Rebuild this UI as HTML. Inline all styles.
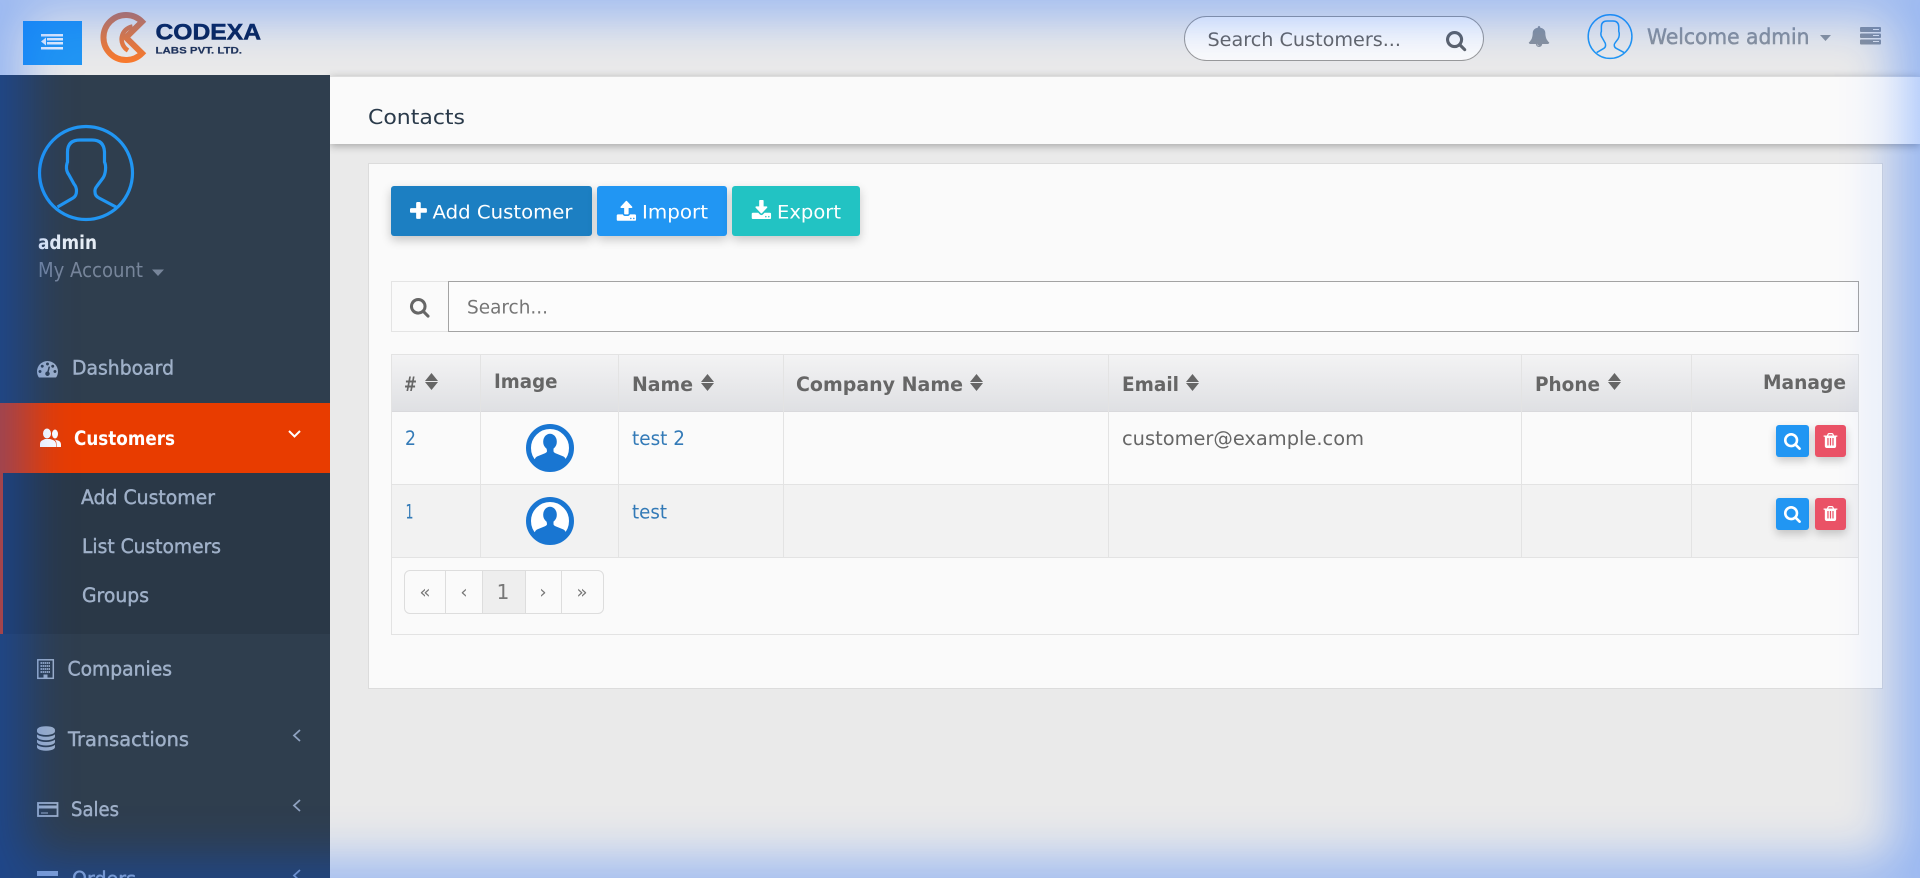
<!DOCTYPE html>
<html><head><meta charset="utf-8"><title>Contacts</title>
<style>
html,body{margin:0;padding:0;width:1920px;height:878px;overflow:hidden;background:#eaeaea}
.b{position:absolute;box-sizing:border-box}
svg{position:absolute;left:0;top:0}
text{font-family:"DejaVu Sans","Liberation Sans",sans-serif;white-space:pre}
</style></head><body>
<div class="b" style="left:0;top:0;width:1920px;height:75px;background:#eaeaea"></div>
<div class="b" style="left:23px;top:21px;width:59px;height:44px;background:#2196f3"></div>
<div class="b" style="left:1184px;top:16px;width:300px;height:45px;border:1px solid #999;border-radius:23px;background:#fbfbfb"></div>
<div class="b" style="left:330px;top:76px;width:1590px;height:68px;background:#fafafa;border-top:1px solid #ddd;box-shadow:0 2px 8px rgba(0,0,0,.3)"></div>
<div class="b" style="left:0;top:75px;width:330px;height:803px;background:#2f3e4e"></div>
<div class="b" style="left:0;top:403px;width:330px;height:70px;background:#e83c00"></div>
<div class="b" style="left:0;top:473px;width:330px;height:161px;background:#2a3847;border-left:3px solid #e83c00"></div>
<div class="b" style="left:368px;top:163px;width:1515px;height:526px;background:#fafafa;border:1px solid #dcdcdc"></div>
<div class="b" style="left:391px;top:186px;width:201px;height:50px;background:#1c7fc2;border-radius:3px;box-shadow:0 4px 10px rgba(0,0,0,.22)"></div>
<div class="b" style="left:597px;top:186px;width:130px;height:50px;background:#2196f3;border-radius:3px;box-shadow:0 4px 10px rgba(0,0,0,.2)"></div>
<div class="b" style="left:732px;top:186px;width:128px;height:50px;background:#22c3c3;border-radius:3px;box-shadow:0 4px 10px rgba(0,0,0,.2)"></div>
<div class="b" style="left:391px;top:281px;width:58px;height:51px;background:#fafafa;border:1px solid #e4e4e4;border-right:0"></div>
<div class="b" style="left:448px;top:281px;width:1411px;height:51px;background:#fcfcfc;border:1px solid #a3a3a3"></div>
<div class="b" style="left:391px;top:354px;width:1468px;height:281px;border:1px solid #e3e3e3"></div>
<div class="b" style="left:392px;top:355px;width:1466px;height:57px;background:linear-gradient(#f3f3f4,#dfe0e3);border-bottom:1px solid #d9d9dc"></div>
<div class="b" style="left:392px;top:484px;width:1466px;height:74px;background:#f2f2f2;border-top:1px solid #e3e3e3;border-bottom:1px solid #e3e3e3"></div>
<div class="b" style="left:480px;top:355px;width:1px;height:203px;background:#e3e3e3"></div>
<div class="b" style="left:618px;top:355px;width:1px;height:203px;background:#e3e3e3"></div>
<div class="b" style="left:783px;top:355px;width:1px;height:203px;background:#e3e3e3"></div>
<div class="b" style="left:1108px;top:355px;width:1px;height:203px;background:#e3e3e3"></div>
<div class="b" style="left:1521px;top:355px;width:1px;height:203px;background:#e3e3e3"></div>
<div class="b" style="left:1691px;top:355px;width:1px;height:203px;background:#e3e3e3"></div>
<div class="b" style="left:404px;top:570px;width:200px;height:44px;border:1px solid #ddd;border-radius:6px;background:#fafafa"></div>
<div class="b" style="left:482px;top:571px;width:44px;height:42px;background:#eee"></div>
<div class="b" style="left:445px;top:571px;width:1px;height:42px;background:#ddd"></div>
<div class="b" style="left:482px;top:571px;width:1px;height:42px;background:#ddd"></div>
<div class="b" style="left:525px;top:571px;width:1px;height:42px;background:#ddd"></div>
<div class="b" style="left:561px;top:571px;width:1px;height:42px;background:#ddd"></div>
<div class="b" style="left:1776px;top:425px;width:33px;height:32px;background:#2196f3;border-radius:3px;box-shadow:0 4px 9px rgba(0,0,0,.2)"></div>
<div class="b" style="left:1815px;top:425px;width:31px;height:32px;background:#ea5266;border-radius:3px;box-shadow:0 4px 9px rgba(0,0,0,.2)"></div>
<div class="b" style="left:1776px;top:498px;width:33px;height:32px;background:#2196f3;border-radius:3px;box-shadow:0 4px 9px rgba(0,0,0,.2)"></div>
<div class="b" style="left:1815px;top:498px;width:31px;height:32px;background:#ea5266;border-radius:3px;box-shadow:0 4px 9px rgba(0,0,0,.2)"></div>

<svg width="1920" height="878" viewBox="0 0 1920 878" xmlns="http://www.w3.org/2000/svg">
<defs>
<linearGradient id="lg" gradientUnits="userSpaceOnUse" x1="0" y1="12" x2="0" y2="63"><stop offset="0" stop-color="#cb7655"/><stop offset="1" stop-color="#fb7a2a"/></linearGradient>
<path id="s" d="M1216 832q0-185-131.500-316.500t-316.500-131.500-316.500 131.500-131.500 316.500 131.500 316.500 316.500 131.500 316.500-131.500 131.500-316.500zm512 832q0 52-38 90t-90 38q-54 0-90-38l-343-342q-179 124-399 124-143 0-273.500-55.500t-225-150-150-225-55.500-273.500 55.500-273.500 150-225 225-150 273.500-55.500 273.500 55.500 225 150 150 225 55.500 273.500q0 220-124 399l343 343q37 37 37 90z"/>
<path id="tr" d="M704 1376v-704q0-14-9-23t-23-9h-64q-14 0-23 9t-9 23v704q0 14 9 23t23 9h64q14 0 23-9t9-23zm256 0v-704q0-14-9-23t-23-9h-64q-14 0-23 9t-9 23v704q0 14 9 23t23 9h64q14 0 23-9t9-23zm256 0v-704q0-14-9-23t-23-9h-64q-14 0-23 9t-9 23v704q0 14 9 23t23 9h64q14 0 23-9t9-23zm-544-992h448l-48-117q-7-9-17-11h-317q-10 2-17 11zm928 32v64q0 14-9 23t-23 9h-96v948q0 83-47 143.500t-113 60.500h-832q-66 0-113-58.500t-47-141.500v-952h-96q-14 0-23-9t-9-23v-64q0-14 9-23t23-9h309l70-167q15-37 54-63t79-26h320q40 0 79 26t54 63l70 167h309q14 0 23 9t9 23z"/>
<g id="sort" fill="#666"><path d="M6.500 0L13 8H0z"/><path d="M0 9h13L6.500 17z"/></g>
<g id="av"><circle cx="24" cy="24" r="21.500" fill="#fff" stroke="#1976d2" stroke-width="5"/><ellipse cx="24" cy="17.700" rx="6.800" ry="8" fill="#1976d2"/><path d="M20.500 24h7v3q0 1.500 2 2.200l8 3.300q1.500.7 2.500 3L38 38Q32 45 24 45 16 45 10 38L8.500 35.500q1-2.300 2.500-3l8-3.300q2-.7 2-2.200z" fill="#1976d2"/></g>
<g id="head" fill="none"><circle cx="86" cy="173" r="46.500"/><path d="M57.500 207L73 198Q76.500 196 76.500 191Q76.500 187 74 184L69 175Q66 171 66.500 166Q67 163 67.500 162L67.500 152Q67.500 140 80 140L92 140Q104 140 104.500 152L104.500 162Q106 165 105.500 170Q105 175 103 178L97 186Q94.500 189 95 192Q95 196 99 198L116 207"/></g>
</defs>

<!-- top bar -->
<g fill="#e9f2fd"><rect x="41" y="34" width="22" height="2.500"/><rect x="47" y="38" width="16" height="2.500"/><rect x="47" y="42" width="16" height="2.500"/><rect x="41" y="47" width="22" height="2.500"/><path d="M46 37.500v8l-5-4z"/></g>
<path d="M142 21.700A22.500 22.500 0 1 0 142 53.300L126 37.500Z" fill="none" stroke="url(#lg)" stroke-width="6"/>
<path d="M132.500 26.500A13 13 0 0 0 128 50.500" fill="none" stroke="url(#lg)" stroke-width="4.500"/>
<text x="155.500" y="39.500" font-size="22" font-weight="700" fill="#0b2556" stroke="#0b2556" stroke-width=".5" style="font-family:'Liberation Sans',sans-serif" textLength="105.500" lengthAdjust="spacingAndGlyphs">CODEXA</text>
<text x="155.500" y="53.300" font-size="9.500" font-weight="700" fill="#1f3258" stroke="#1f3258" stroke-width=".2" style="font-family:'Liberation Sans',sans-serif" textLength="86.500" lengthAdjust="spacingAndGlyphs">LABS PVT. LTD.</text>
<text x="1207.500" y="46" font-size="19" fill="#666" textLength="193.500" lengthAdjust="spacingAndGlyphs">Search Customers...</text>
<use href="#s" transform="translate(1445.200,29.400) scale(.0122)" fill="#5f6368"/>
<path transform="translate(1528,26) scale(.0123,.0117)" fill="#8b929b" d="M912 1696q0-16-16-16-59 0-101.500-42.500t-42.500-101.500q0-16-16-16t-16 16q0 73 51.500 124.500t124.500 51.500q16 0 16-16zm816-288q0 52-38 90t-90 38h-448q0 106-75 181t-181 75-181-75-75-181h-448q-52 0-90-38t-38-90q50-42 91-88t85-119.500 74.500-158.500 50-206 19.500-260q0-152 117-282.500t307-158.500q-8-19-8-39 0-40 28-68t68-28 68 28 28 68q0 20-8 39 190 28 307 158.500t117 282.500q0 139 19.500 260t50 206 74.500 158.500 85 119.500 91 88z"/>
<use href="#head" transform="translate(1587.500,14) scale(.47) translate(-38,-125)" stroke="#2196f3" stroke-width="3.200"/>
<text x="1647" y="44" font-size="21" fill="#8b929b" stroke="#8b929b" stroke-width=".5" textLength="162.500" lengthAdjust="spacingAndGlyphs">Welcome admin</text>
<path d="M1820 35h11l-5.500 6z" fill="#8b929b"/>
<g fill="#8b929b"><rect x="1860" y="27" width="21" height="5" rx="1"/><rect x="1860" y="33.500" width="21" height="4.500" rx="1"/><rect x="1860" y="39.500" width="21" height="5" rx="1"/></g>
<g fill="#eaeaea"><rect x="1873" y="29" width="6" height="1"/><rect x="1873" y="35" width="6" height="1"/><rect x="1873" y="41" width="6" height="1"/></g>
<text x="368" y="124" font-size="20.500" fill="#2a3a4a" textLength="97" lengthAdjust="spacingAndGlyphs">Contacts</text>

<!-- sidebar -->
<use href="#head" stroke="#2196f3" stroke-width="3.200"/>
<text x="38" y="249" font-size="18.500" font-weight="700" fill="#e6edf5" textLength="59" lengthAdjust="spacingAndGlyphs">admin</text>
<text x="38" y="277" font-size="20" fill="#77859a" textLength="105" lengthAdjust="spacingAndGlyphs">My Account</text>
<path d="M152 269.500h12l-6 6.500z" fill="#77859a"/>

<path transform="translate(37,358) scale(.0117)" fill="#9fb0c8" d="M384 1152q0-53-37.500-90.500t-90.500-37.500-90.500 37.500-37.500 90.500 37.500 90.500 90.500 37.500 90.500-37.500 37.500-90.500zm192-448q0-53-37.500-90.500t-90.500-37.500-90.500 37.500-37.500 90.500 37.500 90.500 90.500 37.500 90.500-37.500 37.500-90.500zm428 481l101-382q6-26-7.500-48.500t-38.500-29.500-48 6.500-30 39.500l-101 382q-60 5-107 43.500t-63 98.500q-20 77 20 146t117 89 146-20 89-117q16-60-6-117t-72-91zm660-33q0-53-37.500-90.500t-90.500-37.500-90.500 37.500-37.500 90.500 37.500 90.500 90.500 37.500 90.500-37.500 37.500-90.500zm-640-640q0-53-37.500-90.500t-90.500-37.500-90.500 37.500-37.500 90.500 37.500 90.500 90.500 37.500 90.500-37.500 37.500-90.500zm448 192q0-53-37.500-90.500t-90.500-37.500-90.500 37.500-37.500 90.500 37.500 90.500 90.500 37.500 90.500-37.500 37.500-90.500zm320 448q0 261-141 483-19 29-54 29h-1402q-35 0-54-29-141-221-141-483 0-182 71-348t191-286 286-191 348-71 348 71 286 191 191 286 71 348z"/>
<g font-size="19.500" fill="#9fb0c8" stroke="#9fb0c8" stroke-width=".45">
<text x="72" y="374.500" textLength="102" lengthAdjust="spacingAndGlyphs">Dashboard</text>
<text x="81" y="504" textLength="134" lengthAdjust="spacingAndGlyphs">Add Customer</text>
<text x="82" y="553" textLength="139" lengthAdjust="spacingAndGlyphs">List Customers</text>
<text x="82" y="602" textLength="67" lengthAdjust="spacingAndGlyphs">Groups</text>
<text x="67.500" y="675.500" textLength="104.500" lengthAdjust="spacingAndGlyphs">Companies</text>
<text x="68" y="746" textLength="121" lengthAdjust="spacingAndGlyphs">Transactions</text>
<text x="71" y="816" textLength="48" lengthAdjust="spacingAndGlyphs">Sales</text>
<text x="72" y="885.500" textLength="64" lengthAdjust="spacingAndGlyphs">Orders</text>
</g>
<g fill="#fff"><ellipse cx="47" cy="433.500" rx="4" ry="5"/><path d="M40 447v-3q0-3 3-4l2-1h5l3 1q3 1 3 4v3z"/><ellipse cx="55" cy="434" rx="3" ry="4.500"/><path d="M56 440l2 .5q3 1 3 4v2.500h-4.500v-3q0-3-2-4.500z"/></g>
<text x="74" y="445" font-size="19.500" font-weight="700" fill="#fff" textLength="101" lengthAdjust="spacingAndGlyphs">Customers</text>
<path d="M289 431l5.500 5.500 5.500-5.500" fill="none" stroke="#fff" stroke-width="2"/>
<rect x="37.800" y="659.800" width="15.500" height="18.500" fill="#2f3e4e" stroke="#9fb0c8" stroke-width="1.500"/>
<path d="M40.500 663h10M40.500 666h10M40.500 669h10M40.500 672h10" stroke="#9fb0c8" stroke-width="1.800" stroke-dasharray="1.500 .5"/><rect x="43.500" y="674.500" width="4" height="4" fill="#9fb0c8"/>
<path transform="translate(35.500,726.200) scale(.0117,.0137)" fill="#9fb0c8" d="M896 768q237 0 443-43t325-127v170q0 69-103 128t-280 93.500-385 34.500-385-34.500-280-93.500-103-128v-170q119 84 325 127t443 43zm0 768q237 0 443-43t325-127v170q0 69-103 128t-280 93.500-385 34.500-385-34.500-280-93.500-103-128v-170q119 84 325 127t443 43zm0-384q237 0 443-43t325-127v170q0 69-103 128t-280 93.500-385 34.500-385-34.500-280-93.500-103-128v-170q119 84 325 127t443 43zm0-1152q208 0 385 34.500t280 93.500 103 128v128q0 69-103 128t-280 93.500-385 34.500-385-34.500-280-93.500-103-128v-128q0-69 103-128t280-93.500 385-34.500z"/>
<path d="M300 730l-6 5.500 6 5.500" fill="none" stroke="#8fa2c0" stroke-width="1.800"/>
<rect x="38" y="803" width="19.500" height="13" fill="none" stroke="#9fb0c8" stroke-width="1.800"/><rect x="38" y="805.500" width="19.500" height="3" fill="#9fb0c8"/><path d="M41 813h7" stroke="#9fb0c8"/>
<path d="M300 800l-6 5.500 6 5.500" fill="none" stroke="#8fa2c0" stroke-width="1.800"/>
<g fill="#9fb0c8"><rect x="37" y="871" width="21" height="5"/></g>
<path d="M300 870l-6 5.500 6 5.500" fill="none" stroke="#8fa2c0" stroke-width="1.800"/>

<!-- buttons -->
<path transform="translate(407.700,200.500) scale(.012)" fill="#fff" d="M1600 736v192q0 40-28 68t-68 28h-416v416q0 40-28 68t-68 28h-192q-40 0-68-28t-28-68v-416h-416q-40 0-68-28t-28-68v-192q0-40 28-68t68-28h416v-416q0-40 28-68t68-28h192q40 0 68 28t28 68v416h416q40 0 68 28t28 68z"/>
<text x="432.500" y="218.500" font-size="19" fill="#fff" textLength="140" lengthAdjust="spacingAndGlyphs">Add Customer</text>
<path transform="translate(616,200) scale(.0116,.0125)" fill="#fff" d="M1344 1472q0-26-19-45t-45-19-45 19-19 45 19 45 45 19 45-19 19-45zm256 0q0-26-19-45t-45-19-45 19-19 45 19 45 45 19 45-19 19-45zm128-224v320q0 40-28 68t-68 28h-1472q-40 0-68-28t-28-68v-320q0-40 28-68t68-28h427q21 56 70.500 92t110.500 36h256q61 0 110.500-36t70.500-92h427q40 0 68 28t28 68zm-325-648q-17 40-59 40h-256v448q0 26-19 45t-45 19h-256q-26 0-45-19t-19-45v-448h-256q-42 0-59-40-17-39 14-69l448-448q18-19 45-19t45 19l448 448q31 30 14 69z"/>
<text x="642" y="218.500" font-size="19" fill="#fff" textLength="66" lengthAdjust="spacingAndGlyphs">Import</text>
<path transform="translate(751,200) scale(.0116,.0124)" fill="#fff" d="M1344 1344q0-26-19-45t-45-19-45 19-19 45 19 45 45 19 45-19 19-45zm256 0q0-26-19-45t-45-19-45 19-19 45 19 45 45 19 45-19 19-45zm128-224v320q0 40-28 68t-68 28h-1472q-40 0-68-28t-28-68v-320q0-40 28-68t68-28h465l135 136q58 56 136 56t136-56l136-136h464q40 0 68 28t28 68zm-325-569q17 41-14 70l-448 448q-18 19-45 19t-45-19l-448-448q-31-29-14-70 17-39 59-39h256v-448q0-26 19-45t45-19h256q26 0 45 19t19 45v448h256q42 0 59 39z"/>
<text x="777" y="218.500" font-size="19" fill="#fff" textLength="64" lengthAdjust="spacingAndGlyphs">Export</text>

<!-- search -->
<use href="#s" transform="translate(409.200,296.500) scale(.0118)" fill="#666"/>
<text x="467" y="313.500" font-size="19" fill="#757575" textLength="81" lengthAdjust="spacingAndGlyphs">Search...</text>

<!-- table head -->
<g font-size="19.500" font-weight="700" fill="#666">
<text x="404" y="391" textLength="13" lengthAdjust="spacingAndGlyphs">#</text>
<text x="494" y="388" textLength="63.500" lengthAdjust="spacingAndGlyphs">Image</text>
<text x="632" y="391" textLength="61" lengthAdjust="spacingAndGlyphs">Name</text>
<text x="796" y="391" textLength="167" lengthAdjust="spacingAndGlyphs">Company Name</text>
<text x="1122" y="391" textLength="57" lengthAdjust="spacingAndGlyphs">Email</text>
<text x="1535" y="391" textLength="65" lengthAdjust="spacingAndGlyphs">Phone</text>
<text x="1763" y="389" textLength="83" lengthAdjust="spacingAndGlyphs">Manage</text>
</g>
<use href="#sort" x="425" y="373"/><use href="#sort" x="701" y="374"/><use href="#sort" x="970" y="374"/><use href="#sort" x="1186" y="374"/><use href="#sort" x="1608" y="373"/>

<!-- rows -->
<g font-size="19.500" fill="#337ab7">
<text x="405" y="445" textLength="11" lengthAdjust="spacingAndGlyphs">2</text>
<text x="632" y="445" textLength="53" lengthAdjust="spacingAndGlyphs">test 2</text>
<text x="405.500" y="518.500" textLength="8" lengthAdjust="spacingAndGlyphs">1</text>
<text x="632" y="518.500" textLength="35" lengthAdjust="spacingAndGlyphs">test</text>
</g>
<text x="1122" y="445" font-size="19.500" fill="#666" textLength="242" lengthAdjust="spacingAndGlyphs">customer@example.com</text>
<use href="#av" x="526" y="424"/><use href="#av" x="526" y="497"/>
<g fill="#fff">
<use href="#s" transform="translate(1783.300,431.700) scale(.0102)"/><use href="#s" transform="translate(1783.300,504.700) scale(.0102)"/>
<use href="#tr" transform="translate(1821.700,431.700) scale(.0098)"/><use href="#tr" transform="translate(1821.700,504.700) scale(.0098)"/>
</g>

<!-- pagination -->
<g fill="#777" font-size="18" text-anchor="middle">
<text x="425" y="598">«</text><text x="464" y="598">‹</text><text x="503" y="599" font-size="20">1</text><text x="543" y="598">›</text><text x="582" y="598">»</text>
</g>
</svg>
<div class="b" style="left:0;top:0;width:1280px;height:878px;pointer-events:none;transform-origin:0 0;transform:scaleX(1.5);box-shadow:inset 0 0 40px 18px rgba(0,90,255,.35)"></div>
<div class="b" style="left:1860px;top:164px;width:22px;height:524px;pointer-events:none;background:linear-gradient(to right,rgba(250,250,250,0),rgba(250,250,250,.55))"></div>
<div class="b" style="left:1820px;top:77px;width:100px;height:67px;pointer-events:none;background:linear-gradient(to right,rgba(250,250,250,0),rgba(250,250,250,.45) 62%,rgba(250,250,250,.2))"></div>
</body></html>
